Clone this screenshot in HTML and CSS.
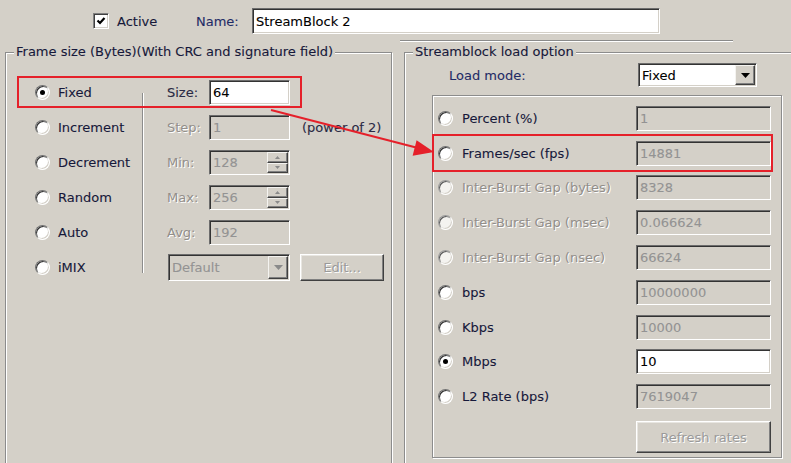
FILE: index.html
```html
<!DOCTYPE html>
<html>
<head>
<meta charset="utf-8">
<link rel="stylesheet" href="styles.css">
</head>
<body>
<div class="page">
  <div class="top">
    <label class="check">
      <span class="checkbox"><svg width="10" height="10" viewBox="0 0 10 10"><path d="M1.5 4.5 L4 7 L8.5 2" fill="none" stroke="#000" stroke-width="2.2"/></svg></span>
      <span class="txt">Active</span>
    </label>
    <span class="name-label">Name:</span>
    <div class="field name-field">StreamBlock 2</div>
  </div>
  <div class="rule"></div>
  <div class="groups">
    <fieldset class="group group-frame">
      <legend>Frame size (Bytes)(With CRC and signature field)</legend>
      <div class="frame-body">
        <div class="radio-col">
          <div class="opt"><span class="radio checked"></span><span class="txt">Fixed</span></div>
          <div class="opt"><span class="radio"></span><span class="txt">Increment</span></div>
          <div class="opt"><span class="radio"></span><span class="txt">Decrement</span></div>
          <div class="opt"><span class="radio"></span><span class="txt">Random</span></div>
          <div class="opt"><span class="radio"></span><span class="txt">Auto</span></div>
          <div class="opt"><span class="radio"></span><span class="txt">iMIX</span></div>
        </div>
        <div class="vsep"></div>
        <div class="fields">
          <span class="lbl">Size:</span>
          <div class="field">64</div>
          <span></span>

          <span class="lbl dis">Step:</span>
          <div class="field dis">1</div>
          <span class="note">(power of 2)</span>

          <span class="lbl dis">Min:</span>
          <div class="field dis spin"><span class="val">128</span><span class="spinbtns"><span class="sb"><svg width="5" height="3" viewBox="0 0 5 3"><path d="M0 3 L2.5 0 L5 3 Z" fill="#8a8a8a"/></svg></span><span class="sb"><svg width="5" height="3" viewBox="0 0 5 3"><path d="M0 0 L2.5 3 L5 0 Z" fill="#8a8a8a"/></svg></span></span></div>
          <span></span>

          <span class="lbl dis">Max:</span>
          <div class="field dis spin"><span class="val">256</span><span class="spinbtns"><span class="sb"><svg width="5" height="3" viewBox="0 0 5 3"><path d="M0 3 L2.5 0 L5 3 Z" fill="#8a8a8a"/></svg></span><span class="sb"><svg width="5" height="3" viewBox="0 0 5 3"><path d="M0 0 L2.5 3 L5 0 Z" fill="#8a8a8a"/></svg></span></span></div>
          <span></span>

          <span class="lbl dis">Avg:</span>
          <div class="field dis">192</div>
          <span></span>

          <div class="field dis combo default-combo"><span class="val">Default</span><span class="dropbtn"><svg width="9" height="5" viewBox="0 0 9 5"><path d="M0 0 L9 0 L4.5 5 Z" fill="#8a8a8a"/></svg></span></div>
          <button class="btn edit">Edit...</button>
        </div>
      </div>
    </fieldset>
    <fieldset class="group group-load">
      <legend>Streamblock load option</legend>
      <div class="mode-row">
        <span class="mode-label">Load mode:</span>
        <div class="field combo mode-combo"><span class="val">Fixed</span><span class="dropbtn"><svg width="9" height="5" viewBox="0 0 9 5"><path d="M0 0 L9 0 L4.5 5 Z" fill="#000"/></svg></span></div>
      </div>
      <div class="rates">
        <div class="rate-row"><span class="radio"></span><span class="txt">Percent (%)</span><div class="field dis">1</div></div>
        <div class="rate-row"><span class="radio"></span><span class="txt">Frames/sec (fps)</span><div class="field dis">14881</div></div>
        <div class="rate-row"><span class="radio dis"></span><span class="txt dis">Inter-Burst Gap (bytes)</span><div class="field dis">8328</div></div>
        <div class="rate-row"><span class="radio dis"></span><span class="txt dis">Inter-Burst Gap (msec)</span><div class="field dis">0.066624</div></div>
        <div class="rate-row"><span class="radio dis"></span><span class="txt dis">Inter-Burst Gap (nsec)</span><div class="field dis">66624</div></div>
        <div class="rate-row"><span class="radio"></span><span class="txt">bps</span><div class="field dis">10000000</div></div>
        <div class="rate-row"><span class="radio"></span><span class="txt">Kbps</span><div class="field dis">10000</div></div>
        <div class="rate-row"><span class="radio checked"></span><span class="txt">Mbps</span><div class="field">10</div></div>
        <div class="rate-row"><span class="radio"></span><span class="txt">L2 Rate (bps)</span><div class="field dis">7619047</div></div>
        <button class="btn refresh">Refresh rates</button>
      </div>
    </fieldset>
  </div>
  <svg class="annot" width="791" height="463" viewBox="0 0 791 463">
    <rect x="18" y="77" width="283" height="30" fill="none" stroke="#e5202a" stroke-width="2"/>
    <rect x="433" y="135" width="339" height="36" fill="none" stroke="#e5202a" stroke-width="2"/>
    <line x1="271" y1="110" x2="418" y2="148" stroke="#e5202a" stroke-width="2"/>
    <path d="M434 152 L412.6 155.7 L416.6 140.3 Z" fill="#e5202a"/>
  </svg>
</div>
</body>
</html>
```
FILE: styles.css
```css
body {
  margin: 0;
  background: #d4d0c8;
  font-family: "DejaVu Sans", "Noto Sans", sans-serif;
  font-size: 13px;
  color: #16183a;
  -webkit-text-stroke: 0.1px currentColor;
}

.page {
  position: relative;
  width: 791px;
  height: 463px;
  overflow: hidden;
}

.top {
  display: flex;
  align-items: center;
  height: 40px;
  padding-top: 2px;
  box-sizing: border-box;
}

.check {
  display: flex;
  align-items: center;
  gap: 8px;
  margin-left: 93px;
  width: 103px;
}

.checkbox {
  width: 16px;
  height: 16px;
  box-sizing: border-box;
  background: #fff;
  border: 1px solid;
  border-color: #808080 #fff #fff #808080;
  box-shadow: inset 1px 1px 0 #404040, inset -1px -1px 0 #d4d0c8;
  display: flex;
  align-items: center;
  justify-content: center;
}

.name-label {
  width: 56px;
  color: #1f2b66;
}

.field {
  box-sizing: border-box;
  height: 25px;
  background: #fff;
  border: 1px solid;
  border-color: #6c6c6c #fff #fff #6c6c6c;
  box-shadow: inset 1px 1px 0 #333, inset -1px -1px 0 #d4d0c8;
  display: flex;
  align-items: center;
  padding-left: 3px;
  color: #000;
}

.field.dis {
  background: #d4d0c8;
  color: #939393;
}

.name-field {
  width: 408px;
  height: 26px;
}

.rule {
  margin-left: 400px;
  width: 333px;
  height: 0;
  border-top: 1px solid #8a8a8a;
  border-bottom: 1px solid #fff;
}

.groups {
  display: flex;
  gap: 12px;
  padding-left: 5px;
  margin-top: 2px;
}

.group {
  margin: 0;
  padding: 0;
  min-inline-size: 0;
  height: 440px;
  box-sizing: border-box;
  border: 1px solid #8c8c8c;
  box-shadow: inset 1px 1px 0 #fff, 1px 1px 0 #fff;
  flex-shrink: 0;
}

.group legend {
  margin-left: 8px;
  padding: 0 2px;
  line-height: 16px;
  background: #d4d0c8;
  color: #16183a;
}

.group-frame {
  width: 387px;
}

.group-load {
  width: 400px;
}

.frame-body {
  display: flex;
  padding-top: 15px;
}

.radio-col {
  width: 136px;
  padding-left: 29px;
  box-sizing: border-box;
}

.opt {
  height: 35px;
  display: flex;
  align-items: center;
  gap: 8px;
}

.radio {
  position: relative;
  flex-shrink: 0;
  width: 15px;
  height: 15px;
  box-sizing: border-box;
  border-radius: 50%;
  background: #fff;
  border: 1px solid;
  border-color: #707070 #fff #fff #707070;
  box-shadow: inset 1px 1px 0 #333, inset -1px -1px 0 #d4d0c8;
}

.radio.dis {
  border-color: #9a9a9a #fff #fff #9a9a9a;
  box-shadow: inset 1px 1px 0 #5a5a5a, inset -1px -1px 0 #d4d0c8;
  background: #f4f3f0;
}

.radio.checked::after {
  content: "";
  position: absolute;
  left: 4px;
  top: 4px;
  width: 5px;
  height: 5px;
  border-radius: 50%;
  background: #000;
}

.txt.dis,
.lbl.dis {
  color: #928e8a;
  text-shadow: 1px 1px 0 #fff;
  -webkit-text-stroke: 0;
}

.vsep {
  width: 0;
  border-left: 1px solid #8c8c8c;
  border-right: 1px solid #fff;
  margin: 18px 0 12px;
}

.fields {
  margin-left: 23px;
  display: grid;
  grid-template-columns: 42px 81px auto;
  grid-auto-rows: 35px;
  align-items: center;
}

.lbl {
  color: #2a2a44;
}

.note {
  padding-left: 12px;
  color: #2a2a44;
}

.spin,
.combo {
  align-items: stretch;
  padding: 1px;
}

.val {
  flex: 1;
  display: flex;
  align-items: center;
  padding-left: 2px;
}

.spinbtns {
  width: 21px;
  display: flex;
  flex-direction: column;
}

.sb,
.dropbtn {
  box-sizing: border-box;
  background: #d4d0c8;
  border: 1px solid;
  border-color: #f4f3f0 #404040 #404040 #f4f3f0;
  box-shadow: inset -1px -1px 0 #808080;
  display: flex;
  align-items: center;
  justify-content: center;
}

.sb {
  flex: 1;
}

.dropbtn {
  width: 20px;
}

.default-combo {
  grid-column: 1 / 3;
  margin-left: 1px;
  height: 27px;
}

.mode-combo {
  width: 119px;
  height: 24px;
}

.btn {
  font: inherit;
  box-sizing: border-box;
  background: #d4d0c8;
  border: 1px solid;
  border-color: #fff #404040 #404040 #fff;
  box-shadow: inset -1px -1px 0 #808080, inset 1px 1px 0 #e8e6e1;
  color: #9a9a9a;
  text-shadow: 1px 1px 0 #fff;
  -webkit-text-stroke: 0;
  padding: 0;
}

.edit {
  margin-left: 10px;
  width: 84px;
  height: 27px;
}

.mode-row {
  display: flex;
  align-items: center;
  height: 24px;
  margin-top: 3px;
}

.mode-label {
  margin-left: 44px;
  width: 189px;
  color: #1f2b66;
}

.rates {
  margin: 8px 0 0 27px;
  width: 350px;
  box-sizing: border-box;
  border: 1px solid #8c8c8c;
  box-shadow: inset 1px 1px 0 #fff, 1px 1px 0 #fff;
  padding: 5px 10px 4px 5px;
}

.rate-row {
  display: flex;
  align-items: center;
  gap: 9px;
  height: 34.8px;
}

.rate-row .field {
  margin-left: auto;
  width: 135px;
}

.refresh {
  display: block;
  margin: 7px 0 0 auto;
  width: 135px;
  height: 32px;
}

.annot {
  position: absolute;
  left: 0;
  top: 0;
  pointer-events: none;
}
```
